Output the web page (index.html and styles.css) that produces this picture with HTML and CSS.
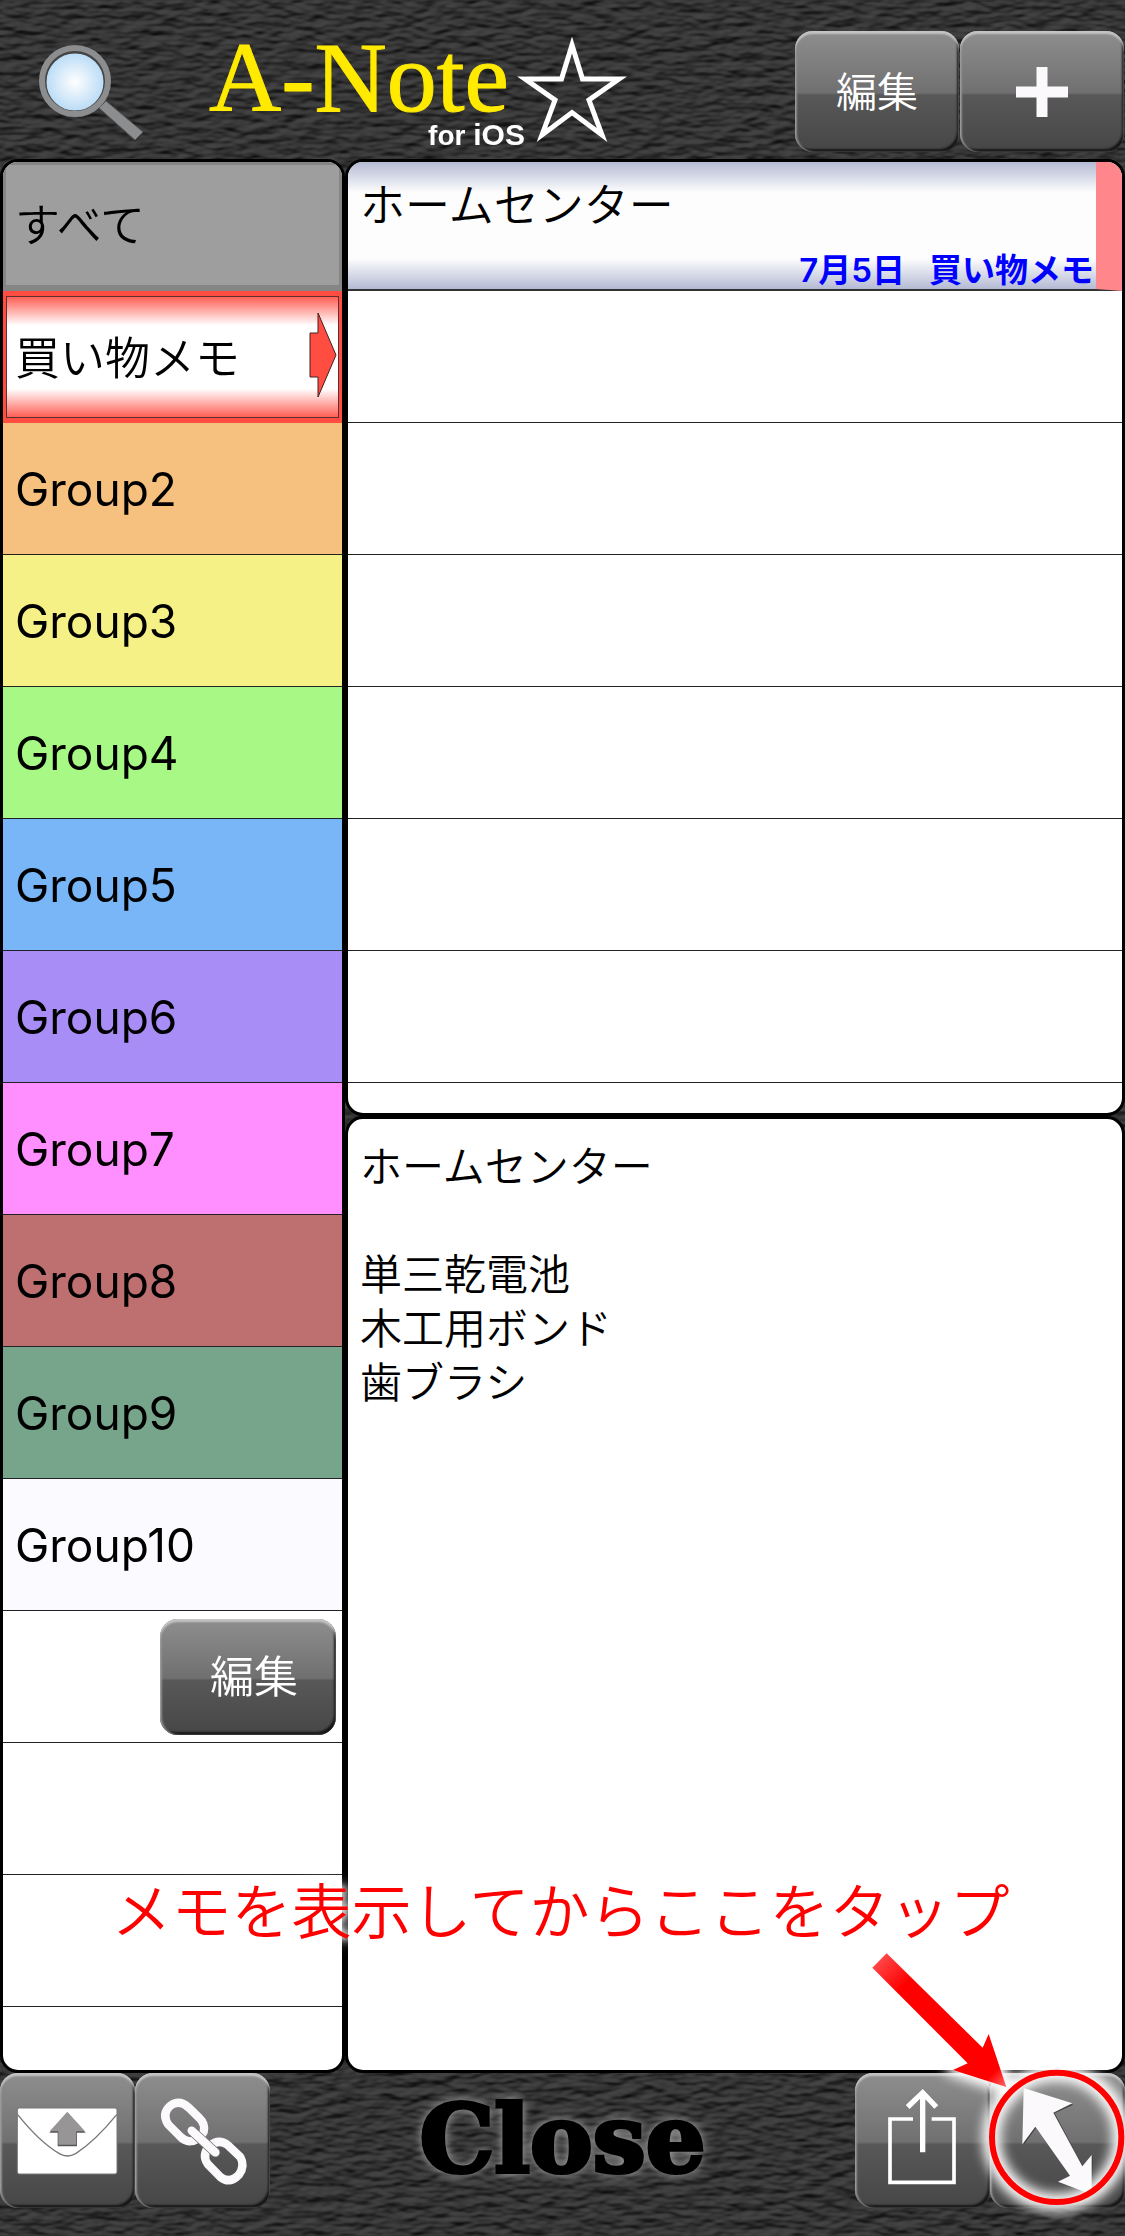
FILE: index.html
```html
<!DOCTYPE html>
<html lang="ja">
<head>
  <meta charset="UTF-8" />
  <meta name="viewport" content="width=device-width, initial-scale=1.0"/>
  <title>A-Note for iOS</title>
  <link rel="stylesheet" href="styles.css">
</head>
<body>
  <!-- leather background -->
  <svg class="leather" aria-hidden="true">
    <filter id="leather" x="0" y="0" width="100%" height="100%" color-interpolation-filters="sRGB">
      <feTurbulence type="fractalNoise" baseFrequency="0.05 0.12" numOctaves="2" seed="21" result="noise"/>
      <feDiffuseLighting in="noise" surfaceScale="3" diffuseConstant="0.27" lighting-color="#ffffff">
        <feDistantLight azimuth="250" elevation="50"/>
      </feDiffuseLighting>
    </filter>
    <rect width="100%" height="100%" filter="url(#leather)"/>
  </svg>

  <div class="app">
    <header class="topbar">
      <button class="search" aria-label="検索">
        <svg width="106" height="98" viewBox="0 0 106 98">
          <defs>
            <radialGradient id="glass">
              <stop offset="0" stop-color="#fff"/>
              <stop offset="1" stop-color="#b3d8f5"/>
            </radialGradient>
          </defs>
          <path d="M62 66 L69 58 L105 90 L97 98 Z" fill="#333"/>
          <path d="M61 64 L68 57 L105 88 L97 96 Z" fill="#8c8d8e" stroke="#555" stroke-width="1"/>
          <circle cx="37" cy="38" r="32" fill="url(#glass)" stroke="#444" stroke-width="7"/>
          <circle cx="37" cy="37" r="33" fill="none" stroke="#8c8d8e" stroke-width="6"/>
        </svg>
      </button>
      <h1 class="logo">
        <span class="logo-text">A-Note<small>for <b>iOS</b></small></span>
        <svg width="112" height="108" viewBox="0 0 112 108" aria-hidden="true">
          <path d="M56 9 L66.500 43 L103 43 L73 64 L86 99 L56 76.500 L26 99 L39 64 L9 43 L45.500 43 Z" fill="none" stroke="#fff" stroke-width="5"/>
        </svg>
      </h1>
      <div class="actions">
        <button class="glossy">編集</button>
        <button class="glossy" aria-label="追加">
          <svg width="52" height="50" viewBox="0 0 52 50"><path d="M26 0V50M0 25H52" stroke="#fbf9fb" stroke-width="11"/></svg>
        </button>
      </div>
    </header>

    <main class="panels">
      <nav class="panel groups">
        <button class="group all">すべて</button>
        <button class="group selected">
          <span>買い物メモ</span>
          <svg width="28" height="88" viewBox="0 0 28 88" aria-hidden="true">
            <path d="M1 22 H9 V2 L27 44 L9 86 V66 H1 Z" fill="#ff4d42" stroke="#402020" stroke-width="1"/>
          </svg>
        </button>
        <button class="group g2">Group2</button>
        <button class="group g3">Group3</button>
        <button class="group g4">Group4</button>
        <button class="group g5">Group5</button>
        <button class="group g6">Group6</button>
        <button class="group g7">Group7</button>
        <button class="group g8">Group8</button>
        <button class="group g9">Group9</button>
        <button class="group g10">Group10</button>
        <div class="group edit-row"><button class="glossy">編集</button></div>
        <div class="group"></div>
        <div class="group"></div>
        <div class="group"></div>
      </nav>

      <section class="notes">
        <div class="panel list">
          <button class="note">
            <span class="note-title">ホームセンター</span>
            <span class="note-info"><span>7月5日</span><span>買い物メモ</span></span>
          </button>
          <div class="note-empty"></div>
          <div class="note-empty"></div>
          <div class="note-empty"></div>
          <div class="note-empty"></div>
          <div class="note-empty"></div>
          <div class="note-empty"></div>
          <div class="note-empty"></div>
        </div>
        <textarea class="panel memo" aria-label="メモ" readonly>ホームセンター

単三乾電池
木工用ボンド
歯ブラシ</textarea>
      </section>
    </main>

    <footer class="bottombar">
      <div class="tools">
        <button class="glossy" aria-label="メール">
          <svg viewBox="0 69 405 405">
            <rect x="52" y="174" width="299" height="198" rx="6" fill="#fff" stroke="#777" stroke-width="3"/>
            <path d="M53 194 C90 240 130 283 178 311 Q202 325 227 311 C275 280 315 237 350 194" fill="none" stroke="#777" stroke-width="4"/>
            <path d="M202 188 L257 248 H231 V289 H173 V248 H148 Z" fill="#555"/>
            <path d="M202 185 L255 244 H229 V284 H175 V244 H149 Z" fill="#979596"/>
          </svg>
        </button>
        <button class="glossy" aria-label="リンク">
          <svg viewBox="405 69 405 405" fill="none" stroke="#fbf9fb" stroke-linecap="round" stroke-linejoin="round">
            <path d="M510 168 Q538 147 565 172 L598 204 Q617 222 611 246 Q597 274 568 274 Q552 272 541 260 L505 224 Q484 192 510 168 Z" stroke-width="25"/>
            <path d="M629 288 Q656 265 683 285 L721 321 Q736 347 717 374 Q689 404 660 380 L623 342 Q604 314 629 288 Z" stroke-width="25"/>
            <path d="M575 242 L646 307" stroke="#777" stroke-width="30"/>
            <path d="M575 242 L646 307" stroke-width="25"/>
          </svg>
        </button>
      </div>
      <button class="close">Close</button>
      <div class="tools">
        <button class="glossy" aria-label="共有">
          <svg viewBox="105 429 405 405" fill="none" stroke="#fff">
            <path d="M279 567 H210 V757 H402 V567 H335" stroke-width="11"/>
            <path d="M308 667 V492 M263 531 L308 488 L349 531" stroke-width="16"/>
          </svg>
        </button>
        <button class="glossy" aria-label="全画面">
          <svg viewBox="510 429 405 405">
            <path d="M614 478 L760 524 L704 550 L791 712 L819 677 V778 L809 793 L718 758 L752 739 L648 594 L611 645 Z" fill="#444"/>
            <path d="M611 474 L757 520 L700 548 L787 709 L815 675 V775 L805 790 L714 755 L750 737 L646 590 L607 643 Z" fill="#fbf9fb"/>
          </svg>
        </button>
      </div>
    </footer>

    <!-- tutorial overlay -->
    <p class="hint">メモを表示してからここをタップ</p>
    <svg class="pointer" width="305" height="306" viewBox="0 0 915 918" aria-hidden="true">
      <defs>
        <linearGradient id="shaft" gradientUnits="userSpaceOnUse" x1="180" y1="90" x2="555" y2="468">
          <stop offset="0" stop-color="#ff4545"/>
          <stop offset="0.2" stop-color="#f00"/>
          <stop offset="0.9" stop-color="#f00"/>
          <stop offset="1" stop-color="#ff6060"/>
        </linearGradient>
        <filter id="glow" x="-20%" y="-20%" width="140%" height="140%">
          <feGaussianBlur stdDeviation="17"/>
        </filter>
      </defs>
      <g filter="url(#glow)">
        <circle cx="710" cy="622" r="195" fill="none" stroke="#fff" stroke-width="54"/>
        <path d="M410 420 L506 330 L559 471 Z" fill="#fff" stroke="#fff" stroke-width="45"/>
      </g>
      <circle cx="710" cy="622" r="194" fill="none" stroke="#f00" stroke-width="18"/>
      <path d="M200 70 L488 353 L506 312 L559 471 L399 420 L443 400 L157 113 Z" fill="url(#shaft)"/>
    </svg>
  </div>
</body>
</html>
```

FILE: styles.css
```css
* {
  box-sizing: border-box;
}

body {
  margin: 0;
  background: #343434;
  color: #000;
  font-family: Inter, 'Noto Sans CJK JP', sans-serif;
}

button {
  margin: 0;
  padding: 0;
  border: none;
  background: none;
  color: inherit;
  font-family: inherit;
  cursor: pointer;
}

svg {
  display: block;
}

.leather {
  position: fixed;
  top: 0;
  left: 0;
  width: 100%;
  height: 100%;
  z-index: -1;
}

.app {
  position: relative;
  display: flex;
  flex-direction: column;
  height: 100vh;
  min-height: 1200px;
}

/* header */
.topbar {
  display: flex;
  align-items: flex-start;
  height: 159px;
  flex-shrink: 0;
}

.search {
  margin: 44px 0 0 38px;
}

.logo {
  display: flex;
  margin: 36px 0 0 65px;
  color: #ffea00;
  font-family: 'Liberation Serif', serif;
  font-size: 100px;
  font-weight: normal;
  line-height: 84px;
}

.logo-text {
  display: flex;
  flex-direction: column;
  -webkit-text-stroke: 1px #ffea00;
}

.logo small {
  align-self: flex-end;
  margin-right: -16px;
  color: #fff;
  font-family: 'Liberation Sans', sans-serif;
  font-size: 28px;
  font-weight: bold;
  line-height: 30px;
  -webkit-text-stroke: 0;
}

.logo small b {
  font-size: 30px;
}

.logo svg {
  margin-left: 7px;
}

.actions {
  display: flex;
  gap: 1px;
  margin: 31px 1px 0 auto;
}

.glossy {
  display: flex;
  align-items: center;
  justify-content: center;
  width: 164px;
  height: 121px;
  border-radius: 18px;
  background: linear-gradient(#8e8e8e, #707070 51%, #585858 53%, #464646);
  box-shadow: inset 0 3px 2px #c4c4c4, inset 2px 0 2px #8c8c8c, inset -2px -3px 2px #171717;
  color: #fff;
  font-size: 41px;
  font-weight: 350;
  line-height: 48px;
}

/* panels */
.panels {
  display: grid;
  grid-template-columns: 345px 1fr;
  flex: 1;
  min-height: 0;
}

.panel {
  min-height: 0;
  border: 3px solid #000;
  border-radius: 18px;
  background: #fff;
  overflow: hidden;
}

.groups {
  display: flex;
  flex-direction: column;
}

.group {
  display: flex;
  align-items: center;
  flex-shrink: 0;
  height: 132px;
  padding: 0 12px;
  border-bottom: 1px solid #222;
  font-size: 46px;
  text-align: left;
}

.all {
  height: 129px;
  padding-bottom: 8px;
  border-bottom: none;
  background: #9e9e9e;
  box-shadow: inset 0 0 0 3px #858585, inset 0 -6px 0 #858585;
  font-size: 45px;
  font-weight: 350;
}

.selected {
  justify-content: space-between;
  padding: 0 2px 4px 9px;
  background: linear-gradient(#ff5a50, #fff 24%, #fff 76%, #ff5a50);
  border: solid #ff4d42;
  border-width: 5px 3px;
  box-shadow: inset 0 0 0 1px #5b3030;
  font-size: 45px;
  font-weight: 350;
}

.g2 { background: #f6c07f; }
.g3 { background: #f6f186; }
.g4 { background: #a8f886; }
.g5 { background: #78b6f8; }
.g6 { background: #a98df6; }
.g7 { background: #ff8fff; }
.g8 { background: #be7070; }
.g9 { background: #76a58c; }
.g10 { background: #fbfbff; }

.edit-row {
  justify-content: flex-end;
  padding-right: 6px;
}

.edit-row .glossy {
  width: 176px;
  height: 116px;
  padding-left: 12px;
  font-size: 44px;
}

.notes {
  display: grid;
  grid-template-rows: 1fr 1fr;
  min-height: 0;
}

.note {
  display: flex;
  flex-direction: column;
  align-items: flex-start;
  justify-content: space-between;
  width: 100%;
  height: 129px;
  padding: 13px 2px 0 12px;
  border-right: 26px solid #ff878c;
  border-bottom: 2px solid #333;
  background: linear-gradient(#b4bad4, #fdfdfd 24%, #fdfdfd 76%, #b4bad4);
}

.note-title {
  font-size: 45px;
  font-weight: 350;
  line-height: 62px;
}

.note-info {
  display: flex;
  align-self: flex-end;
  gap: 24px;
  color: #00f;
  font-size: 33px;
  font-weight: 600;
  line-height: 38px;
}

.note-empty {
  height: 132px;
  border-bottom: 1px solid #222;
}

.memo {
  width: 100%;
  padding: 21px 12px;
  outline: none;
  resize: none;
  color: #000;
  font-family: Inter, 'Noto Sans CJK JP', sans-serif;
  font-size: 42px;
  font-weight: 350;
  line-height: 54px;
}

/* footer */
.bottombar {
  display: flex;
  justify-content: space-between;
  align-items: flex-start;
  height: 163px;
  flex-shrink: 0;
}

.tools {
  display: flex;
}

.tools .glossy {
  width: 135px;
  height: 135px;
}

.tools svg {
  width: 135px;
  height: 135px;
}

.close {
  font-family: 'DejaVu Serif', serif;
  font-size: 94px;
  font-weight: bold;
  line-height: 132px;
  -webkit-text-stroke: 4px #000;
  text-shadow: 0 0 14px #aaa, 0 0 8px #999;
}

/* tutorial overlay */
.hint {
  position: absolute;
  right: 4px;
  bottom: 279px;
  left: 0;
  margin: 0;
  color: #f00;
  font-size: 60px;
  font-weight: 350;
  line-height: 90px;
  text-align: center;
  text-shadow: 0 0 6px #fff, 0 0 10px #fff, 0 0 14px #fff, 0 0 18px #fff;
  pointer-events: none;
}

.pointer {
  position: absolute;
  right: 0;
  bottom: 0;
  pointer-events: none;
}
```
